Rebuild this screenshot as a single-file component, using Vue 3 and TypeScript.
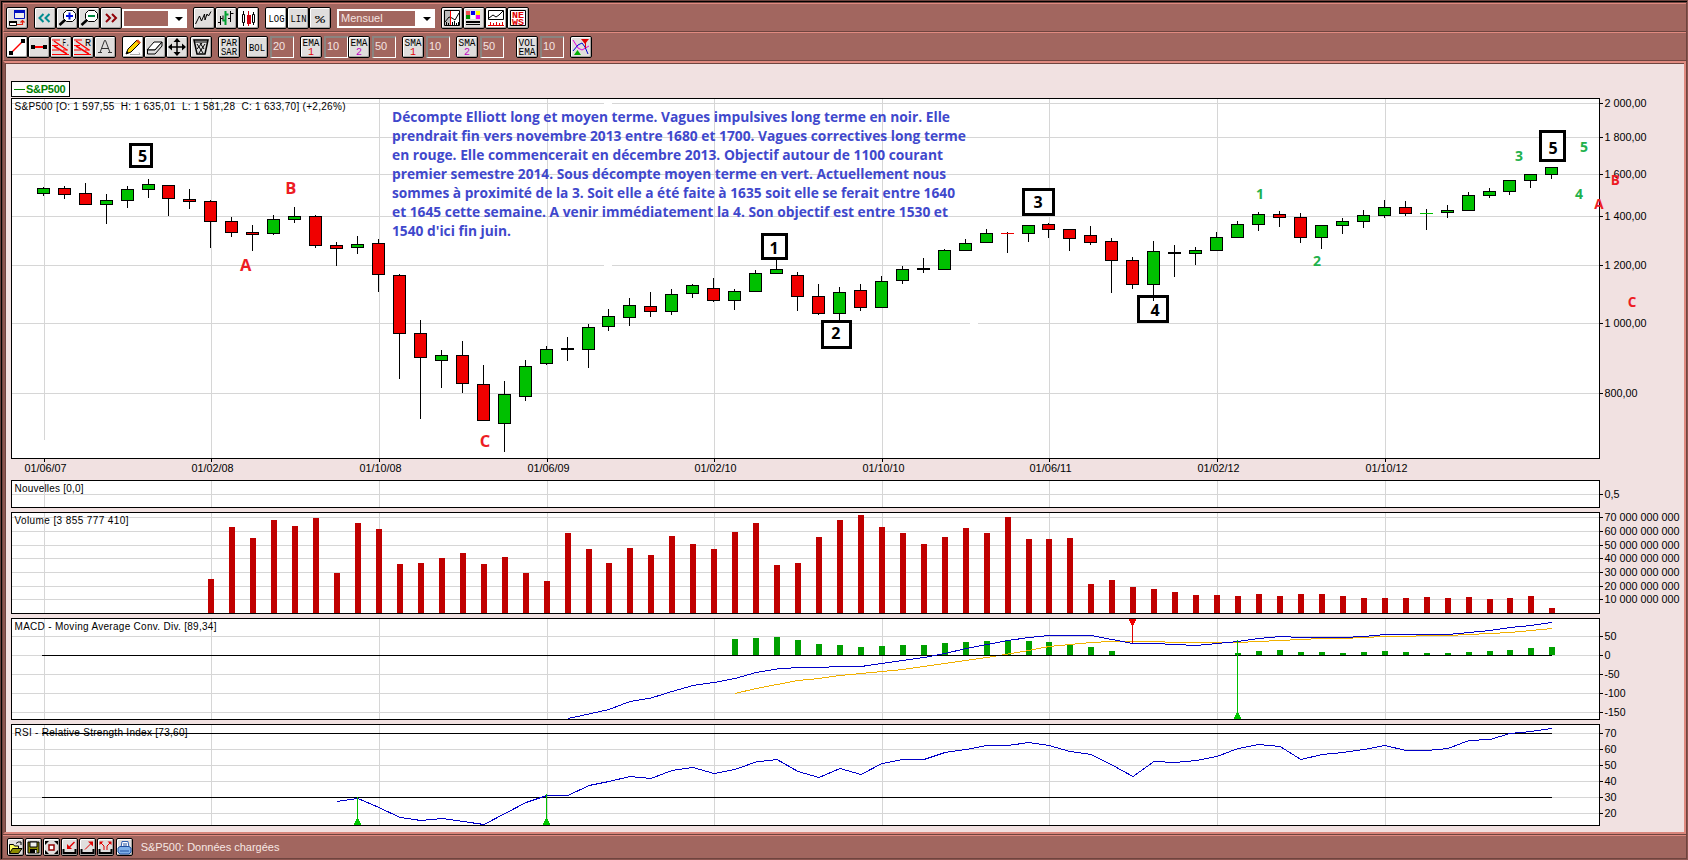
<script setup lang="ts">
interface Shape { d?: string; f?: string; s?: string; w?: number; t?: string; x?: number; y?: number; l?: number }
interface Tool { icon: string; on?: boolean; input?: string }
interface Group { id: string; tools: Tool[]; select?: string }

const K = '#000'
const fanLines = 'M2 4h8M2 9.500h6M2 14h7M13 14h5M2 18.500h17'
const icons: Record<string, Shape[]> = {
  windows: [
    { d: 'M8.500 4.500h10v7h-10z', f: '#eee', s: '#0010c0', w: 1 }, { d: 'M8 3h11v3h-11z', f: '#0010c0' },
    { d: 'M3.500 14.500h7v4h-7z', f: '#fff', s: K }, { d: 'M3 14h8v2h-8z', f: K },
    { d: 'M11 17.500h5.500v-3.500M14.500 15.500l2-2 2 2', s: '#e02010', w: 1.2 },
  ],
  back: [{ d: 'M9.500 7l-4 4 4 4M15.500 7l-4 4 4 4', s: '#008c90', w: 2 }],
  next: [{ d: 'M6 7l4 4-4 4M12 7l4 4-4 4', s: '#900008', w: 2 }],
  zoomIn: [
    { d: 'M10.500 3.500h6l3 3v5l-3 3h-6l-3-3v-5z', f: '#fff', s: K }, { d: 'M9 13l-5.500 5', s: K, w: 2.6 },
    { d: 'M10 9h7M13.500 5.500v7', s: '#0010e0', w: 2 },
  ],
  zoomOut: [
    { d: 'M10.500 3.500h6l3 3v5l-3 3h-6l-3-3v-5z', f: '#fff', s: K }, { d: 'M9 13l-5.500 5', s: K, w: 2.6 },
    { d: 'M10 9h7', s: '#008a40', w: 2 },
  ],
  line: [{ d: 'M2.500 17l4-8 2 5 3-7 .5 6 2-6 1.500 2 2.500-4.500', s: K }],
  bars: [
    { d: 'M5.500 9v9M3 15.500h2.500M5.500 11.500h2M8 8.500v5M15.500 4v11M13 11.500h2.500M15.500 6.500h3', s: K },
    { d: 'M10.500 4v14M7.500 13.500h3M10.500 7.500h3', s: '#00a030', w: 2 },
  ],
  candles: [
    { d: 'M6.500 4v15M16.500 5v13', s: K }, { d: 'M5.500 7.500h2v8h-2zM15.500 7.500h2v8h-2z', s: K, f: '#fff' },
    { d: 'M11.500 4v15', s: '#d00010' }, { d: 'M10 8h4v9h-4z', f: '#d00010' },
  ],
  log: [{ t: 'LOG', x: 3.500, y: 15, l: 16 }],
  lin: [{ t: 'LIN', x: 3.500, y: 15, l: 16 }],
  pct: [{ t: '%', x: 6, y: 15.500, l: 10 }],
  split: [
    { d: 'M3.500 3.500h15v15h-15z', f: '#fff', s: K }, { d: 'M4 4h5v14h-5z', f: '#bbb' },
    { d: 'M4 15l4-5 3 1 3 2 4-7', s: K }, { d: 'M5.500 18v-3M7.500 18v-2M11.500 18v-3M13.500 18v-4M15.500 18v-2M17.500 18v-3', s: K },
    { d: 'M9.500 4v14', s: '#f00' },
  ],
  palette: [
    { d: 'M3 4h4v4h-4z', f: '#f05050' }, { d: 'M8 4h4v4h-4z', f: '#0000f0' }, { d: 'M13 4h4v4h-4z', f: '#ffff00' },
    { d: 'M3 8h4v4h-4z', f: '#009000' }, { d: 'M8 8h4v4h-4z', f: '#fff' }, { d: 'M13 8h4v4h-4z', f: '#f000f0' },
    { d: 'M3 14h14v2h-14zM3 17h14v1h-14z', f: K },
  ],
  chart: [
    { d: 'M3.500 3.500h15v9h-15z', f: '#fff', s: K }, { d: 'M4 11l4-3 3 2 3-2 4-4', s: K },
    { d: 'M3 14h16v5h-16z', f: '#fff' }, { d: 'M3 18.500h16M5.500 18v-3M8.500 18v-2M11.500 18v-3M14.500 18v-2M17.500 18v-3', s: '#e00000' },
  ],
  news: [
    { d: 'M3.500 3.500h15v15h-15z', f: '#fff', s: K },
    { t: 'NE', x: 5, y: 10.500, l: 12, f: '#e00000' }, { t: 'WS', x: 5, y: 18, l: 12, f: '#e00000' },
  ],
  segment: [{ d: 'M5 17l12-12', s: '#f00', w: 1.4 }, { d: 'M3 15h4v4h-4zM15 3h4v4h-4z', f: K }],
  horizontal: [{ d: 'M5 11h12', s: '#f00', w: 2 }, { d: 'M3 9h4v4h-4zM15 9h4v4h-4z', f: K }],
  fan: [{ d: fanLines, s: '#f00' }, { d: 'M4 5l13 9M4 10l13 8', s: '#f00', w: 1.5 }, { t: 'F.', x: 12.500, y: 10, l: 7 }],
  retr: [{ d: fanLines, s: '#f00' }, { d: 'M4 5l13 9M4 10l13 8', s: '#f00', w: 1.5 }, { t: 'R', x: 13, y: 10, l: 6 }],
  text: [{ d: 'M6 16.500l4.500-12h1l4.500 12M7.500 12.500h7M4 16.500h4M14 16.500h4', s: '#333' }],
  pencil: [
    { d: 'M8 18.500h10l-1-2', s: '#aaa' }, { d: 'M4 18l2-5 9-9 3 3-9 9z', f: '#ffd400', s: K },
    { d: 'M14 5l2-1.500 3 3-2 1.500z', f: '#e05010' }, { d: 'M4 18l1-3 2 2z', f: K },
  ],
  eraser: [{ d: 'M3 14l7-8h8l-7 8z', f: '#fff', s: K }, { d: 'M3.500 14v4h7.500l7-8v-4l-7 8z', f: '#ddd', s: K }],
  move: [{ d: 'M11 4v14M4 11h14', s: K, w: 1.500 }, { d: 'M11 2l3.500 4h-7zM11 20l3.500-4h-7zM2 11l4-3.500v7zM20 11l-4-3.500v7z', f: K }],
  trash: [
    { d: 'M4 4h14l-3 14h-8z', f: '#ddd', s: K, w: 1.500 }, { d: 'M4 6h14M7 8l6 9M10 7l4 6M15 8l-6 9M12 7l-5 6', s: K },
  ],
  parsar: [{ t: 'PAR', x: 3, y: 10, l: 16 }, { t: 'SAR', x: 3, y: 19, l: 16 }],
  bol: [{ t: 'BOL', x: 3, y: 15, l: 16 }],
  ema1: [{ t: 'EMA', x: 2.500, y: 10, l: 17 }, { t: '1', x: 8, y: 19, l: 6, f: '#e00000' }],
  ema2: [{ t: 'EMA', x: 2.500, y: 10, l: 17 }, { t: '2', x: 8, y: 19, l: 6, f: '#c000c0' }],
  sma1: [{ t: 'SMA', x: 2.500, y: 10, l: 17 }, { t: '1', x: 8, y: 19, l: 6, f: '#e00000' }],
  sma2: [{ t: 'SMA', x: 2.500, y: 10, l: 17 }, { t: '2', x: 8, y: 19, l: 6, f: '#c000c0' }],
  volema: [{ t: 'VOL', x: 2.500, y: 10, l: 17 }, { t: 'EMA', x: 2.500, y: 19, l: 17 }],
  signals: [
    { d: 'M3 4l5 8 4 2 7-4', s: '#e000e0' }, { d: 'M3 15l5-6 4-2 3 4 3 7', s: '#0000d0' },
    { d: 'M11 3h8l-4 5z', f: '#e00000' }, { d: 'M4 19h7l-3.500-5z', f: '#00b000' }, { d: 'M15.500 3v9', s: '#e00000' },
  ],
  open: [{ d: 'M2.500 5.500h4l1 1.500h4v7h-9z', f: '#ffff60', s: K }, { d: 'M2.500 14.500l3-5h9.500l-3.500 5z', f: '#8c8c00', s: K }, { d: 'M9 4.500l2-1.500h3v3', s: K }],
  save: [{ d: 'M3 3h11v11h-11z', f: '#8c8c00', s: K }, { d: 'M5 3h7v5h-7z', f: '#eee', s: K }, { d: 'M5 10h7v4h-7z', f: K }, { d: 'M10 11h1.500v3h-1.500z', f: '#eee' }],
  fit: [{ d: 'M6 6h5v5h-5z', f: '#fff', s: '#900000', w: 1.500 }, { d: 'M2 6v-4h4zM11 2h4v4zM2 11v4h4zM15 11v4h-4z', f: K }],
  importIn: [{ d: 'M2.500 10v4h12v-4', s: K, w: 2 }, { d: 'M13.500 3l-5 5', s: '#e00000', w: 1.500 }, { d: 'M6 5v5h5z', f: '#e00000' }],
  exportOut: [{ d: 'M2.500 10v4h12v-4', s: K, w: 2 }, { d: 'M6 10.500l6-6', s: '#e00000' }, { d: 'M9 2.500h5v5z', f: '#e00000' }],
  exportAll: [{ d: 'M2.500 10v4h12v-4', s: K, w: 2 }, { d: 'M4 4l3 3v4M13 4l-3 3v4', s: '#e00000' }, { d: 'M2.500 6v-3.500h4zM14.500 6v-3.500h-4z', f: '#e00000' }],
  print: [{ d: 'M6 2.500h6l1 6h-8z', f: '#fff', s: '#3060b0' }, { d: 'M2 9l2-1.500h9l2 1.500v4l-2 2h-9l-2-2z', f: '#7fb0e8', s: '#2050a0' }, { d: 'M4 12h9M7 5h4M7 7h4', s: '#2050a0' }],
}

const bars: { id: string; groups: Group[] }[] = [
  { id: 'view', groups: [
    { id: 'win', tools: [{ icon: 'windows' }] },
    { id: 'nav', tools: [{ icon: 'back' }, { icon: 'zoomIn' }, { icon: 'zoomOut' }, { icon: 'next' }], select: '' },
    { id: 'style', tools: [{ icon: 'line' }, { icon: 'bars' }, { icon: 'candles', on: true }] },
    { id: 'scale', tools: [{ icon: 'log', on: true }, { icon: 'lin' }, { icon: 'pct' }] },
    { id: 'period', tools: [], select: 'Mensuel' },
    { id: 'panes', tools: [{ icon: 'split' }, { icon: 'palette' }, { icon: 'chart', on: true }, { icon: 'news' }] },
  ] },
  { id: 'draw', groups: [
    { id: 'lines', tools: [{ icon: 'segment', on: true }, { icon: 'horizontal' }, { icon: 'fan' }, { icon: 'retr' }, { icon: 'text' }] },
    { id: 'edit', tools: [{ icon: 'pencil', on: true }, { icon: 'eraser' }, { icon: 'move' }] },
    { id: 'bin', tools: [{ icon: 'trash' }] },
    { id: 'sar', tools: [{ icon: 'parsar' }] },
    { id: 'bol', tools: [{ icon: 'bol', input: '20' }] },
    { id: 'ema', tools: [{ icon: 'ema1', input: '10' }, { icon: 'ema2', input: '50' }] },
    { id: 'smaA', tools: [{ icon: 'sma1', input: '10' }] },
    { id: 'smaB', tools: [{ icon: 'sma2', input: '50' }] },
    { id: 'volema', tools: [{ icon: 'volema', input: '10' }] },
    { id: 'signals', tools: [{ icon: 'signals' }] },
  ] },
]
const files = ['open', 'save', 'fit', 'importIn', 'exportOut', 'exportAll', 'print']

const cx = (i: number) => 43 + 21 * i - +(i >= 6) - +(i >= 27) - +(i >= 48) - +(i >= 70)

/* high, body top, body bottom, low, kind */
type Candle = [number, number, number, number, string]
const candles: Candle[] = [
  [187, 188, 194, 196, 'g'], [186, 188, 195, 199, 'r'], [183, 193, 205, 205, 'r'], [194, 200, 205, 224, 'g'],
  [186, 189, 201, 208, 'g'], [179, 184, 190, 198, 'g'], [185, 185, 199, 216, 'r'], [189, 199, 202, 209, 'r'],
  [200, 201, 222, 248, 'r'], [217, 221, 233, 237, 'r'], [225, 232, 235, 251, 'r'], [215, 219, 234, 235, 'g'],
  [207, 216, 220, 223, 'g'], [215, 216, 246, 248, 'r'], [242, 245, 249, 266, 'r'], [236, 244, 248, 254, 'g'],
  [239, 243, 275, 292, 'r'], [274, 275, 334, 379, 'r'], [320, 333, 358, 419, 'r'], [350, 355, 361, 388, 'g'],
  [341, 355, 384, 393, 'r'], [365, 384, 421, 421, 'r'], [381, 394, 424, 452, 'g'], [360, 366, 397, 401, 'g'],
  [346, 349, 364, 365, 'g'], [337, 348, 350, 361, 'k'], [324, 327, 350, 368, 'g'], [309, 316, 327, 331, 'g'],
  [298, 305, 318, 326, 'g'], [292, 306, 312, 317, 'r'], [289, 294, 312, 315, 'g'], [284, 285, 294, 298, 'g'],
  [278, 288, 301, 302, 'r'], [289, 291, 301, 310, 'g'], [270, 273, 292, 292, 'g'], [260, 269, 274, 274, 'g'],
  [272, 275, 297, 311, 'r'], [284, 296, 314, 315, 'r'], [287, 292, 314, 320, 'g'], [284, 290, 308, 311, 'r'],
  [276, 281, 308, 308, 'g'], [266, 269, 281, 284, 'g'], [258, 268, 270, 273, 'k'], [249, 250, 270, 270, 'g'],
  [239, 243, 251, 251, 'g'], [229, 233, 243, 243, 'g'], [232, 233, 234, 253, 'rl'], [225, 225, 234, 242, 'g'],
  [223, 224, 230, 238, 'r'], [229, 229, 239, 251, 'r'], [226, 235, 243, 245, 'r'], [238, 241, 261, 293, 'r'],
  [257, 260, 285, 289, 'r'], [241, 251, 285, 301, 'g'], [245, 252, 254, 277, 'k'], [247, 250, 254, 265, 'g'],
  [232, 237, 251, 251, 'g'], [221, 224, 238, 238, 'g'], [212, 214, 225, 231, 'g'], [211, 214, 218, 227, 'r'],
  [213, 217, 238, 243, 'r'], [225, 225, 238, 249, 'g'], [218, 221, 226, 234, 'g'], [210, 215, 222, 228, 'g'],
  [200, 207, 216, 218, 'g'], [201, 207, 214, 216, 'r'], [209, 213, 214, 230, 'gl'], [205, 210, 213, 218, 'g'],
  [192, 195, 211, 211, 'g'], [188, 191, 196, 198, 'g'], [180, 180, 192, 195, 'g'], [174, 174, 181, 188, 'g'],
  [167, 167, 175, 179, 'g'],
]
const edge = (k: string) => (k === 'rl' ? '#f00000' : k === 'gl' ? '#00c000' : '#000')

const volume = [579, 527, 538, 520, 526, 518, 573, 523, 529, 564, 563, 558, 553, 564, 557, 573, 581, 533, 549, 563, 548, 555, 536, 544, 549, 532, 523, 565, 563, 537, 520, 515, 527, 533, 544, 537, 528, 533, 517, 539, 539, 538, 584, 580, 587, 589, 592, 595, 595, 596, 594, 596, 594, 594, 596, 598, 598, 598, 597, 598, 597, 599, 598, 596, 608]
const histogram = [639, 638, 637, 640, 644, 645, 647, 646, 645, 645, 643, 642, 641, 641, 641, 642, 644, 647, 651, 655, 655, 655, 655, 655, 653, 651, 650, 652, 652, 653, 652, 651, 652, 653, 653, 652, 651, 650, 648, 647]
const macd = [718, 713.5, 709, 701, 697.5, 691, 685, 682, 678, 672, 668.5, 667, 667, 666, 666, 663, 660, 657, 653, 648, 644, 640, 637, 635, 635, 635, 639, 643, 643, 644, 645, 643, 641, 638, 636, 637, 637, 637, 636, 634, 634, 634, 634, 632, 630, 627, 625, 622]
const signal = [693, 688, 684, 680, 678, 675, 673, 671, 669, 666, 663, 660, 657, 653.5, 650, 646, 644, 642, 641, 641, 641, 642, 642, 642, 642, 641, 640, 639, 638, 638, 637, 636, 636, 635, 635, 634, 633, 632, 630, 628]
const rsi = [801, 798, 807, 817, 820, 818, 821, 824, 813, 802, 795, 795, 785, 781, 776, 778, 770, 767, 773, 769, 761.5, 759, 771, 777, 768, 774, 763, 759, 759, 752, 749, 745, 745, 742, 745, 751, 754, 764.5, 776, 761, 762, 760, 756, 748, 744, 746, 759, 754, 752, 749, 745, 750, 750, 748, 740, 739, 733, 731, 728]
const pts = (a: number[], from: number) => a.map((y, k) => `${cx(k + from) + 1},${y + 0.5}`).join(' ')
/* stepped arrow heads, 7px wide */
const up = (x: number, y: number) => `M${x - 1} ${y - 6}h3v2h1v2h1v2h-7v-2h1v-2h1z`
const down = (x: number, y: number) => `M${x - 3} ${y}h7v2h-1v2h-1v2h-3v-2h-1v-2h-1z`

const xs = [44, 211, 379, 547, 714, 882, 1049, 1217, 1385]
const dates = ['01/06/07', '01/02/08', '01/10/08', '01/06/09', '01/02/10', '01/10/10', '01/06/11', '01/02/12', '01/10/12']

interface Panel { id: string; y: number; h: number; top: number; bottom: number; title: string; ty: number; tw: number; axis: [number, string, number][] }
const panels: Panel[] = [
  { id: 'price', y: 97, h: 380, top: 98, bottom: 458, title: 'S&P500 [O: 1 597,55\u00a0 H: 1 635,01\u00a0 L: 1 581,28\u00a0 C: 1 633,70] (+2,26%)', ty: 110, tw: 331,
    axis: [[103, '2 000,00', 42], [137, '1 800,00', 42], [174, '1 600,00', 42], [216, '1 400,00', 42], [265, '1 200,00', 42], [323, '1 000,00', 42], [393, '800,00', 33]] },
  { id: 'news', y: 477, h: 32, top: 480, bottom: 507, title: 'Nouvelles [0,0]', ty: 492, tw: 69, axis: [[494, '0,5', 15]] },
  { id: 'volume', y: 509, h: 107, top: 512, bottom: 613, title: 'Volume [3 855 777 410]', ty: 524, tw: 114,
    axis: [[517, '70 000 000 000', 75], [531, '60 000 000 000', 75], [545, '50 000 000 000', 75], [558, '40 000 000 000', 75], [572, '30 000 000 000', 75], [586, '20 000 000 000', 75], [599, '10 000 000 000', 75]] },
  { id: 'macd', y: 616, h: 105, top: 618, bottom: 719, title: 'MACD - Moving Average Conv. Div. [89,34]', ty: 630, tw: 202,
    axis: [[636, '50', 12], [655, '0', 6], [674, '-50', 15], [693, '-100', 21], [712, '-150', 21]] },
  { id: 'rsi', y: 721, h: 111, top: 724, bottom: 825, title: 'RSI - Relative Strength Index [73,60]', ty: 736, tw: 173,
    axis: [[733, '70', 12], [749, '60', 12], [765, '50', 12], [781, '40', 12], [797, '30', 12], [813, '20', 12]] },
]

type Box = [number, number, number, number, string, number, number]
const boxes: Box[] = [
  [129, 143, 24, 25, '5', 142.7, 161.5], [761, 233, 27, 27, '1', 774, 254], [821, 320, 31, 29, '2', 835.8, 339],
  [1022, 188, 33, 28, '3', 1038, 208], [1137, 295, 32, 28, '4', 1155, 316], [1539, 130, 27, 32, '5', 1553, 154],
]
type Mark = [string, number, number, string, number]
const marks: Mark[] = [
  ['A', 245.7, 271, '#ed1c24', 16.5], ['B', 290.7, 194, '#ed1c24', 16.5], ['C', 485, 447, '#ed1c24', 16.5],
  ['B', 1615.3, 185.3, '#ed1c24', 13.5], ['A', 1599, 209, '#ed1c24', 13.5], ['C', 1632, 307, '#ed1c24', 13.5],
  ['1', 1260, 199.3, '#22b14c', 14], ['2', 1317, 266, '#22b14c', 14], ['3', 1519, 161, '#22b14c', 14],
  ['4', 1579, 199.3, '#22b14c', 14], ['5', 1584, 152, '#22b14c', 14],
]
const note: [string, number][] = [
  ['Décompte Elliott long et moyen terme. Vagues impulsives long terme en noir. Elle', 558],
  ['prendrait fin vers novembre 2013 entre 1680 et 1700. Vagues correctives long terme', 574],
  ['en rouge. Elle commencerait en décembre 2013. Objectif autour de 1100 courant', 551],
  ['premier semestre 2014. Sous décompte moyen terme en vert. Actuellement nous', 554],
  ['sommes à proximité de la 3. Soit elle a été faite à 1635 soit elle se ferait entre 1640', 563],
  ['et 1645 cette semaine. A venir immédiatement la 4. Son objectif est entre 1530 et', 556],
  ["1540 d'ici fin juin.", 119],
]
</script>

<template>
  <div class="window">
    <header v-for="bar in bars" :key="bar.id" class="bar">
      <div v-for="g in bar.groups" :key="g.id" class="group" :class="g.id">
        <template v-for="b in g.tools" :key="b.icon">
          <button class="btn" :class="{ on: b.on }">
            <svg width="20" height="20" viewBox="1 1 20 20">
              <template v-for="(s, k) in icons[b.icon]" :key="k">
                <text v-if="s.t" :x="s.x" :y="s.y" :textLength="s.l" lengthAdjust="spacingAndGlyphs" :fill="s.f || '#000'">{{ s.t }}</text>
                <path v-else :d="s.d" :fill="s.f || 'none'" :stroke="s.s || 'none'" :stroke-width="s.w || 1" />
              </template>
            </svg>
          </button>
          <span v-if="b.input" class="field">{{ b.input }}</span>
        </template>
        <div v-if="g.select !== undefined" class="select"><span class="value">{{ g.select }}</span><i class="caret"></i></div>
      </div>
    </header>

    <main class="stage">
      <div class="legend"><i class="dash"></i><b>S&amp;P500</b></div>
      <svg v-for="p in panels" :key="p.id" class="panel" width="1678" :height="p.h" :viewBox="`6 ${p.y} 1678 ${p.h}`">
        <g shape-rendering="crispEdges">
          <rect x="11.5" :y="p.top + 0.5" width="1588" :height="p.bottom - p.top" fill="#fff" />
          <path v-for="a in p.axis" :key="a[0]" :d="`M12 ${a[0] + 0.5}H1599`" stroke="#d6d6d6" />
          <path v-for="(x, i) in xs" :key="x" :d="`M${x + 0.5} ${p.top}V${p.id === 'price' && i === 0 ? 440 : p.bottom}`" stroke="#d6d6d6" />
          <path v-for="a in p.axis" :key="'t' + a[0]" :d="`M1600 ${a[0] + 0.5}h3`" stroke="#000" />
        </g>
        <text class="label" x="14.500" :y="p.ty" :textLength="p.tw" lengthAdjust="spacing">{{ p.title }}</text>
        <text v-for="a in p.axis" :key="'l' + a[0]" class="label" x="1604.500" :y="a[0] + 4" :textLength="a[2]" lengthAdjust="spacingAndGlyphs">{{ a[1] }}</text>

        <template v-if="p.id === 'price'">
          <path d="M604 103.500h8M604 265.500h8M970 323.500h8" stroke="#fff" stroke-width="2" />
          <g v-for="(x, i) in xs" :key="'d' + x">
            <path :d="`M${x + 0.5} 459v3`" stroke="#000" />
            <text class="label" :x="x - 19.5" y="472" textLength="42" lengthAdjust="spacingAndGlyphs">{{ dates[i] }}</text>
          </g>
          <g v-for="(b, i) in boxes" :key="'b' + i">
            <rect :x="b[0] + 1.5" :y="b[1] + 1.5" :width="b[2] - 3" :height="b[3] - 3" fill="#fff" stroke="#000" stroke-width="3" />
            <text class="mark" :x="b[5]" :y="b[6]" font-size="16">{{ b[4] }}</text>
          </g>
          <g v-for="(c, i) in candles" :key="'c' + i" shape-rendering="crispEdges">
            <rect :x="cx(i)" :y="c[0]" width="1" :height="c[3] - c[0]" fill="#000" />
            <rect :x="cx(i) - 6" :y="c[1]" width="13" :height="c[2] - c[1]" :fill="edge(c[4])" />
            <rect v-if="c[4] === 'g' || c[4] === 'r'" :x="cx(i) - 5" :y="c[1] + 1" width="11" :height="c[2] - c[1] - 2" :fill="c[4] === 'g' ? '#00c000' : '#f00000'" />
          </g>
          <text v-for="(n, i) in note" :key="'n' + i" class="note" x="392" :y="122 + 19 * i" :textLength="n[1]" lengthAdjust="spacingAndGlyphs">{{ n[0] }}</text>
        </template>

        <g v-if="p.id === 'volume'" shape-rendering="crispEdges" fill="#c00000">
          <rect v-for="(v, i) in volume" :key="i" :x="cx(i + 8) - 2" :y="v" width="6" :height="613 - v" />
        </g>

        <g v-if="p.id === 'macd'" shape-rendering="crispEdges" fill="none">
          <rect v-for="(v, i) in histogram" :key="i" :x="cx(i + 33) - 2" :y="v" width="6" :height="655 - v" fill="#00a000" />
          <polyline :points="pts(signal, 33)" stroke="#f0b000" />
          <path d="M42 655.500H1552" stroke="#000" />
          <polyline :points="pts(macd, 25)" stroke="#0000c8" />
          <path d="M1132.500 619V643" stroke="#e00000" />
          <path :d="down(1132, 619)" fill="#f00000" />
          <path d="M1237.500 640V719" stroke="#00c000" />
          <path :d="up(1237, 719)" fill="#00c800" />
        </g>

        <g v-if="p.id === 'rsi'" shape-rendering="crispEdges" fill="none">
          <path d="M42 733.500H1552M42 797.500H1552" stroke="#000" />
          <polyline :points="pts(rsi, 14)" stroke="#0000c8" />
          <path d="M357.500 797V825M546.500 794V825" stroke="#00c000" />
          <path :d="up(357, 825) + up(546, 825)" fill="#00c800" />
        </g>
        <rect shape-rendering="crispEdges" x="11.500" :y="p.top + 0.5" width="1588" :height="p.bottom - p.top" fill="none" stroke="#000" />
        <template v-if="p.id === 'price'">
          <text v-for="(m, i) in marks" :key="'m' + i" class="mark" :x="m[1]" :y="m[2]" :fill="m[3]" :font-size="m[4]">{{ m[0] }}</text>
        </template>
      </svg>
    </main>

    <footer class="status">
      <button v-for="f in files" :key="f" class="small">
        <svg width="15" height="15" viewBox="1 1 15 15">
          <path v-for="(s, k) in icons[f]" :key="k" :d="s.d" :fill="s.f || 'none'" :stroke="s.s || 'none'" :stroke-width="s.w || 1" />
        </svg>
      </button>
      <span class="message">S&amp;P500: Données chargées</span>
    </footer>
  </div>
</template>

<style scoped>
.window {
  box-sizing: border-box;
  width: 1688px;
  height: 860px;
  display: flex;
  flex-direction: column;
  background: #a2665f;
  border-top: 1px solid #6b423d;
  border-left: 1px solid #6b423d;
  border-right: 1px solid #8c5650;
  border-bottom: 1px solid #8c5650;
  box-shadow: inset 1px 1px #000, inset 2px 2px #6f443f, inset -1px -1px #6f443f;
  padding: 2px 1px 1px 2px;
  font-family: "Liberation Sans", Arial, sans-serif;
}
.bar {
  display: flex;
  flex: none;
  gap: 6px;
  box-sizing: border-box;
  height: 29px;
  padding: 3px 0 0 2px;
  border-top: 1px solid #e08a80;
  border-left: 1px solid #d8857b;
  border-bottom: 1px solid #6f443f;
}
.group { display: flex; height: 22px; }
.btn, .small {
  box-sizing: border-box;
  flex: none;
  width: 22px;
  height: 22px;
  padding: 0;
  border: 1px solid #000;
  border-radius: 2px;
  background: #e0dedd;
  box-shadow: inset 1px 1px #fff, inset -1px -1px #aaa5a3;
}
.btn.on { background: #fff; }
.btn svg, .small svg { display: block; overflow: visible; }
.btn text { font: 10.5px "Liberation Mono", monospace; stroke: currentColor; stroke-width: 0; }
.panes text { font-weight: 700; font-size: 9.5px; }
.select {
  box-sizing: border-box;
  display: flex;
  align-items: center;
  justify-content: space-between;
  background: #fff;
  height: 19px;
  margin-top: 2px;
  padding: 1px 4px 1px 2px;
  width: 65px;
}
.period .select { width: 98px; }
.value {
  box-sizing: border-box;
  background: #a2665f;
  color: #f5e4e1;
  width: 44px;
  height: 15px;
  padding-left: 2px;
  font-size: 11px;
  line-height: 15px;
}
.period .value { width: 76px; }
.caret { border: 4px solid transparent; border-top: 4px solid #000; border-bottom: 0; }
.field {
  box-sizing: border-box;
  width: 24px;
  height: 22px;
  margin-left: 2px;
  border: 1px solid #fff;
  border-top: 2px solid #8a8480;
  border-left: 2px solid #8a8480;
  color: #f5e4e1;
  font-size: 11px;
  line-height: 16px;
  padding-left: 1px;
}
.bin { margin-left: -4px; }
.volema { margin-left: 6px; }
.stage {
  height: 773px;
  flex: none;
  display: flex;
  flex-direction: column;
  box-sizing: border-box;
  background: #f1e1e1;
  border: 2px solid #e08a80;
  border-left: 2px solid #8b5650;
  border-bottom-color: #d8857b;
  box-shadow: inset 1px 1px #6f443f;
  padding: 18px 0 0 1px;
}
.legend {
  box-sizing: border-box;
  display: flex;
  flex: none;
  align-items: center;
  width: 59px;
  height: 16px;
  margin-left: 5px;
  padding-left: 2px;
  border: 1px solid #000;
  background: #fff;
  color: #008000;
}
.legend b { font-size: 11px; margin-left: 1px; letter-spacing: -.25px; }
.dash { flex: none; width: 11px; height: 1px; background: #008000; }
.panel { display: block; flex: none; overflow: visible; }
.label { font: 10px "Liberation Sans", Arial, sans-serif; fill: #000; }
.note { font: 700 14px "Open Sans", sans-serif; fill: #3f48cc; }
.mark { font-family: "Open Sans", sans-serif; font-weight: 700; text-anchor: middle; }
.status {
  flex: 1;
  display: flex;
  gap: 1.1px;
  align-items: flex-start;
  border-top: 1px solid #6f443f;
  box-shadow: inset 0 1px #e08a80;
  padding: 3px 0 0 4px;
}
.small { width: 17px; height: 18px; }
.message { color: #f7e6e3; font-size: 11px; line-height: 19px; margin-left: 7px; }
</style>

<style>
html, body { margin: 0; overflow: hidden; background: #a2665f; }
</style>
